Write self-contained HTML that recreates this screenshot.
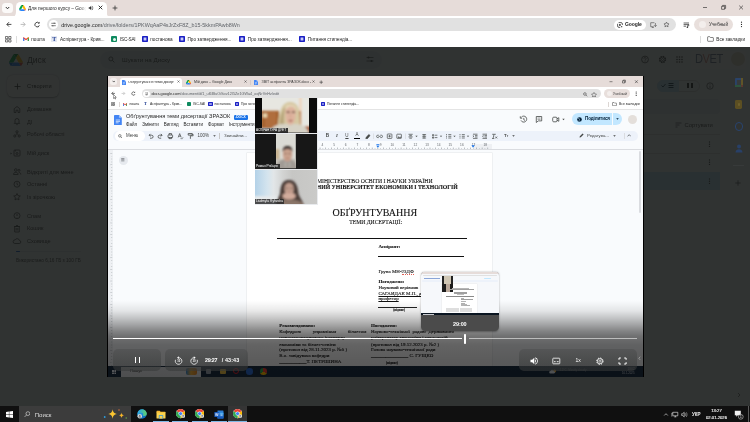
<!DOCTYPE html>
<html lang="uk">
<head>
<meta charset="utf-8">
<title>Для першого курсу – Google Диск</title>
<style>
html,body{margin:0;padding:0;}
body{width:750px;height:422px;overflow:hidden;background:#323433;font-family:"Liberation Sans",sans-serif;position:relative;}
.abs{position:absolute;}
.t{position:absolute;white-space:nowrap;line-height:1;}
/* ---------- outer chrome ---------- */
#tabstrip{left:0;top:0;width:750px;height:17px;background:#e6dcd9;}
#tab{left:16px;top:2px;width:90.5px;height:15px;background:#fff;border-radius:4.5px 4.5px 0 0;}
#toolbar{left:0;top:16px;width:750px;height:17px;background:#fff;}
#urlbar{left:47px;top:18px;width:629px;height:13px;border-radius:7px;background:#e1e1e1;}
#bookmarks{left:0;top:33px;width:750px;height:14px;background:#fff;}
.bm{font-size:4.65px;color:#1f1f1f;top:37.5px;}
.bmi{position:absolute;top:36px;width:6.3px;height:6.3px;background:#1a1fc4;border-radius:1px;box-shadow:inset 0 0 0 1.6px #1a1fc4, inset 0 0 0 3px #c9cdf5;}
/* ---------- drive page ---------- */
#drive{left:0;top:47px;width:750px;height:359px;background:#f8fafd;overflow:hidden;}
#dim{left:0;top:47px;width:750px;height:359px;background:rgba(18,21,20,.87);}
.side{font-size:5.6px;color:#3c3f3e;left:27px;}
.ibm{font-size:3.35px;color:#1f1f1f;top:102.9px;}
.ibmi{position:absolute;top:101.7px;width:4.5px;height:4.5px;background:#1a1fc4;border-radius:.8px;box-shadow:inset 0 0 0 1.2px #1a1fc4, inset 0 0 0 2.2px #c9cdf5;}
.rn{font-size:3.2px;color:#5f6368;top:143.8px;width:6px;text-align:center;}
.ds{font-family:"Liberation Serif",serif;font-size:4.97px;text-underline-offset:.5px;text-decoration-thickness:.35px;color:#111;-webkit-text-stroke:.1px #111;}
.b{font-weight:bold;}
.pill{border-radius:5px;background:linear-gradient(180deg,rgba(70,72,72,.42),rgba(55,57,57,.58));}
.tr{-webkit-text-stroke:.15px currentColor;}
/* ---------- taskbar ---------- */
#taskbar{left:0;top:405.8px;width:750px;height:16.2px;background:#101010;}
.ul{top:420.7px;height:1.3px;background:#7fb9e6;}
</style>
</head>
<body>
<div id="root" style="position:absolute;left:0;top:0;width:750px;height:422px;overflow:hidden;will-change:transform;">
<!-- ===== Outer Chrome window ===== -->
<div class="abs" id="tabstrip"></div>
<div class="abs" style="left:2.4px;top:2.5px;width:10.6px;height:10.4px;border-radius:3.5px;background:#fbf9f8;"></div>
<svg class="abs" style="left:5.2px;top:6px" width="5" height="4" viewBox="0 0 5 4"><path d="M.8 1 L2.5 2.8 L4.2 1" fill="none" stroke="#333" stroke-width="1"/></svg>
<div class="abs" id="tab"></div>
<svg class="abs" style="left:18.5px;top:5px" width="7" height="6.2" viewBox="0 0 87.3 78"><path d="M6.6 66.85l3.85 6.65c.8 1.4 1.95 2.5 3.3 3.3L27.5 53H0c0 1.55.4 3.1 1.2 4.5z" fill="#0066da"/><path d="M43.65 25L29.9 1.2c-1.35.8-2.5 1.9-3.3 3.3L1.2 48.5C.4 49.9 0 51.45 0 53h27.5z" fill="#00ac47"/><path d="M73.55 76.8c1.35-.8 2.5-1.9 3.3-3.3l1.6-2.75L86.1 57.5c.8-1.4 1.2-2.95 1.2-4.5H59.8l5.85 11.5z" fill="#ea4335"/><path d="M43.65 25L57.4 1.2C56.05.4 54.5 0 52.9 0H34.4c-1.6 0-3.15.45-4.5 1.2z" fill="#00832d"/><path d="M59.8 53H27.5L13.75 76.8c1.35.8 2.9 1.2 4.5 1.2h50.8c1.6 0 3.15-.45 4.5-1.2z" fill="#2684fc"/><path d="M73.4 26.5L60.7 4.5c-.8-1.4-1.95-2.5-3.3-3.3L43.65 25 59.8 53h27.45c0-1.55-.4-3.1-1.2-4.5z" fill="#ffba00"/></svg>
<div class="t" style="left:28px;top:5.8px;font-size:4.8px;color:#1f1f1f;width:58px;height:7px;overflow:hidden;line-height:7px;margin-top:-1.1px">Для першого курсу – Google Диск</div>
<div class="abs" style="left:80px;top:4px;width:6px;height:10px;background:linear-gradient(90deg,rgba(255,255,255,0),#fff);"></div>
<svg class="abs" style="left:87.5px;top:5.2px" width="6" height="6" viewBox="0 0 24 24"><path d="M3 9v6h4l5 5V4L7 9H3zm13.5 3A4.5 4.5 0 0014 8v8a4.5 4.5 0 002.5-4zM14 3.2v2.1a7 7 0 010 13.4v2.1a9 9 0 000-17.6z" fill="#333"/></svg>
<svg class="abs" style="left:97.5px;top:5.2px" width="5" height="5" viewBox="0 0 5 5"><path d="M.7.7L4.3 4.3M4.3.7L.7 4.3" stroke="#222" stroke-width=".9"/></svg>
<svg class="abs" style="left:111.5px;top:5.2px" width="6" height="6" viewBox="0 0 6 6"><path d="M3 .6V5.4M.6 3H5.4" stroke="#333" stroke-width=".8"/></svg>
<!-- window controls -->
<svg class="abs" style="left:702px;top:4px" width="44" height="8" viewBox="0 0 44 8"><path d="M1 3.5H5" stroke="#222" stroke-width=".6"/><path d="M19.6 2.3h3v3h-3z M20.6 2.3v-.9h3v3h-1" fill="none" stroke="#222" stroke-width=".6"/><path d="M37.2 1.6L41 5.4M41 1.6L37.2 5.4" stroke="#222" stroke-width=".6"/></svg>
<div class="abs" id="toolbar"></div>
<svg class="abs" style="left:12px;top:12px" width="99" height="5" viewBox="0 0 99 5"><path d="M0 5h4V0c0 3-1.5 5-4 5zM99 5h-4.5V0c0 3 1.5 5 4.5 5z" fill="#fff"/></svg>
<svg class="abs" style="left:5.5px;top:21px" width="36" height="7" viewBox="0 0 36 7"><path d="M5.4 3.4H1M3 1.2L.8 3.4 3 5.6" fill="none" stroke="#2a2a2a" stroke-width=".85"/><path d="M14.6 3.4H19M17 1.2l2.2 2.2L17 5.6" fill="none" stroke="#b0b0b0" stroke-width=".85"/><path d="M33 2.2A2.3 2.3 0 1 0 33.4 4.3" fill="none" stroke="#2a2a2a" stroke-width=".85"/><path d="M33.6.8v1.8h-1.8z" fill="#333"/></svg>
<div class="abs" id="urlbar"></div>
<div class="abs" style="left:49px;top:20px;width:9px;height:9px;border-radius:5px;background:#fff;"></div>
<svg class="abs" style="left:51px;top:22px" width="5" height="5" viewBox="0 0 5 5"><path d="M.3 1.3H2.4M3.8 1.3H4.8M.3 3.7H1.2M2.6 3.7H4.8" stroke="#333" stroke-width=".6"/><circle cx="3.1" cy="1.3" r=".7" fill="#333"/><circle cx="1.9" cy="3.7" r=".7" fill="#333"/></svg>
<div class="t" style="left:61.3px;top:22.9px;font-size:5.38px;color:#5f6368;"><span style="color:#1f1f1f">drive.google.com</span>/drive/folders/1PKWqAaP4sJrZxF8Z_b15-5kkmPAwb8Wn</div>
<!-- right side of toolbar -->
<div class="abs" style="left:614px;top:19.5px;width:32px;height:10px;border-radius:5px;background:#fff;"></div>
<svg class="abs" style="left:616.5px;top:21.5px" width="6" height="6" viewBox="0 0 6 6"><path d="M1.6.6H4a1.4 1.4 0 011.4 1.4V3M.6 1.8V4A1.4 1.4 0 002 5.4H3.2" fill="none" stroke="#222" stroke-width=".7"/><circle cx="2.9" cy="2.9" r=".9" fill="#222"/><circle cx="4.7" cy="4.7" r=".6" fill="#222"/></svg>
<div class="t" style="left:625px;top:22.2px;font-size:5px;color:#1f1f1f;font-weight:bold;letter-spacing:-.1px">Google</div>
<svg class="abs" style="left:650px;top:21.5px" width="7" height="6" viewBox="0 0 7 6"><path d="M4.4.7H.7v4h3M1.8 5.5h2" fill="none" stroke="#444" stroke-width=".6"/><path d="M5.4 1v3.4M3.9 3.1l1.5 1.5 1.3-1.5" fill="none" stroke="#444" stroke-width=".6"/></svg>
<svg class="abs" style="left:662.5px;top:21px" width="7" height="7" viewBox="0 0 24 24"><path d="M12 3.5l2.6 5.6 6.1.7-4.5 4.2 1.2 6-5.4-3-5.4 3 1.2-6-4.5-4.2 6.1-.7z" fill="none" stroke="#444" stroke-width="2"/></svg>
<svg class="abs" style="left:683px;top:21.5px" width="7" height="6" viewBox="0 0 7 6"><path d="M.6 1h5.4M.6 2.6h5.4M.6 4.2H3" stroke="#222" stroke-width=".7"/><path d="M4.8 3.2v2.2M4.8 3.2h1.5" stroke="#222" stroke-width=".7"/><circle cx="4.3" cy="5.2" r=".7" fill="#222"/></svg>
<div class="abs" style="left:694px;top:18px;width:39px;height:13px;border-radius:6.5px;background:#e8dfdc;"></div>
<div class="abs" style="left:699px;top:21px;width:7px;height:7px;border-radius:4px;background:#f3eeec;"></div>
<div class="t" style="left:709px;top:22.5px;font-size:4.65px;color:#333;">Учебный</div>
<svg class="abs" style="left:740px;top:21px" width="3" height="7" viewBox="0 0 3 7"><circle cx="1.5" cy="1.2" r=".6" fill="#222"/><circle cx="1.5" cy="3.4" r=".6" fill="#222"/><circle cx="1.5" cy="5.6" r=".6" fill="#222"/></svg>
<div class="abs" id="bookmarks"></div>
<svg class="abs" style="left:5px;top:36px" width="6.5" height="6.5" viewBox="0 0 13 13"><path d="M1 1h4.5v4.5H1zM7.5 1H12v4.5H7.5zM1 7.5h4.5V12H1zM7.5 7.5H12V12H7.5z" fill="none" stroke="#333" stroke-width="1.3"/></svg>
<div class="abs" style="left:16.3px;top:36px;width:.5px;height:6.5px;background:#dcdcdc;"></div>
<svg class="abs" style="left:22.8px;top:36.8px" width="6" height="4.6" viewBox="0 0 24 18"><path d="M0 2v14a2 2 0 002 2h3V7.5l7 5.2 7-5.2V18h3a2 2 0 002-2V2l-3-1.5-9 6.8-9-6.8z" fill="#ea4335"/><path d="M0 2.5V16a2 2 0 002 2h3V6.5z" fill="#4285f4"/><path d="M24 2.5V16a2 2 0 01-2 2h-3V6.5z" fill="#34a853"/><path d="M19 1.2l5 1.3-5 4.5z" fill="#fbbc04"/></svg>
<div class="t bm" style="left:31.3px;">пошта</div>
<div class="abs" style="left:51.3px;top:36.2px;width:5.5px;height:6px;background:#e4e8f2;"></div>
<div class="t" style="left:52.3px;top:36.3px;font-size:6px;font-weight:bold;color:#1d3a8f;font-family:'Liberation Serif',serif">T</div>
<div class="t bm" style="left:60px;">Аспірантура - Крив...</div>
<div class="abs" style="left:111.3px;top:36px;width:6.2px;height:6.2px;background:#0e8a5f;border-radius:1px;"></div>
<div class="abs" style="left:112.8px;top:37.5px;width:3.2px;height:3.2px;background:#e8f5ee;border-radius:2px;"></div>
<div class="t bm" style="left:120px;letter-spacing:-.2px;">ISC-SAI</div>
<div class="bmi" style="left:141.7px;"></div><div class="t bm" style="left:150.3px;">постанова</div>
<div class="bmi" style="left:178.7px;"></div><div class="t bm" style="left:187.5px;">Про затвердження...</div>
<div class="bmi" style="left:239px;"></div><div class="t bm" style="left:247.8px;">Про затвердження...</div>
<div class="bmi" style="left:299px;"></div><div class="t bm" style="left:307.8px;">Питання стипендіа...</div>
<div class="abs" style="left:700.3px;top:36px;width:.5px;height:6.5px;background:#dcdcdc;"></div>
<svg class="abs" style="left:706.5px;top:36.3px" width="7" height="6" viewBox="0 0 7 6"><path d="M.6 1.2a.5.5 0 01.5-.5h1.7l.7.8h2.4a.5.5 0 01.5.5v2.8a.5.5 0 01-.5.5H1.1a.5.5 0 01-.5-.5z" fill="none" stroke="#333" stroke-width=".6"/></svg>
<div class="t bm" style="left:716.3px;">Все закладки</div>

<!-- ===== Drive page (dimmed) ===== -->
<div class="abs" id="drive">
  <!-- header -->
  <svg class="abs" style="left:9px;top:6.5px" width="14" height="12.5" viewBox="0 0 87.3 78"><path d="M6.6 66.85l3.85 6.65c.8 1.4 1.95 2.5 3.3 3.3L27.5 53H0c0 1.55.4 3.1 1.2 4.5z" fill="#0066da"/><path d="M43.65 25L29.9 1.2c-1.35.8-2.5 1.9-3.3 3.3L1.2 48.5C.4 49.9 0 51.45 0 53h27.5z" fill="#00ac47"/><path d="M73.55 76.8c1.35-.8 2.5-1.9 3.3-3.3l1.6-2.75L86.1 57.5c.8-1.4 1.2-2.95 1.2-4.5H59.8l5.85 11.5z" fill="#ea4335"/><path d="M43.65 25L57.4 1.2C56.05.4 54.5 0 52.9 0H34.4c-1.6 0-3.15.45-4.5 1.2z" fill="#00832d"/><path d="M59.8 53H27.5L13.75 76.8c1.35.8 2.9 1.2 4.5 1.2h50.8c1.6 0 3.15-.45 4.5-1.2z" fill="#2684fc"/><path d="M73.4 26.5L60.7 4.5c-.8-1.4-1.95-2.5-3.3-3.3L43.65 25 59.8 53h27.45c0-1.55-.4-3.1-1.2-4.5z" fill="#ffba00"/></svg>
  <div class="t" style="left:27px;top:8.8px;font-size:8.6px;color:#444746;">Диск</div>
  <div class="abs" style="left:100px;top:3.5px;width:282px;height:18px;border-radius:9px;background:#e9eef6;"></div>
  <svg class="abs" style="left:107.5px;top:9px" width="7" height="7" viewBox="0 0 7 7"><circle cx="2.9" cy="2.9" r="2" fill="none" stroke="#444746" stroke-width=".8"/><path d="M4.4 4.4L6.4 6.4" stroke="#444746" stroke-width=".8"/></svg>
  <div class="t" style="left:122px;top:9.5px;font-size:6.2px;color:#444746;">Шукати на Диску</div>
  <svg class="abs" style="left:366px;top:9px" width="8" height="7" viewBox="0 0 8 7"><path d="M.5 1.5H7.5M.5 5H7.5" stroke="#444746" stroke-width=".7"/><circle cx="2.5" cy="1.5" r="1" fill="#444746"/><circle cx="5.5" cy="5" r="1" fill="#444746"/></svg>
  <svg class="abs" style="left:640px;top:7.5px" width="46" height="9" viewBox="0 0 46 9"><circle cx="5" cy="4.5" r="3.4" fill="none" stroke="#444746" stroke-width=".8"/><path d="M3.9 3.7a1.1 1.1 0 112 .6c-.5.4-.9.6-.9 1.3" fill="none" stroke="#444746" stroke-width=".7"/><circle cx="5" cy="6.6" r=".45" fill="#444746"/><circle cx="22.5" cy="4.5" r="3" fill="none" stroke="#444746" stroke-width="1.3" stroke-dasharray="1.4 .95"/><circle cx="22.5" cy="4.5" r="2.5" fill="none" stroke="#444746" stroke-width=".8"/><circle cx="22.5" cy="4.5" r="1" fill="none" stroke="#444746" stroke-width=".7"/><g fill="#444746"><circle cx="37" cy="2" r=".8"/><circle cx="39.5" cy="2" r=".8"/><circle cx="42" cy="2" r=".8"/><circle cx="37" cy="4.5" r=".8"/><circle cx="39.5" cy="4.5" r=".8"/><circle cx="42" cy="4.5" r=".8"/><circle cx="37" cy="7" r=".8"/><circle cx="39.5" cy="7" r=".8"/><circle cx="42" cy="7" r=".8"/></g></svg>
  <div class="abs" style="left:691px;top:3.5px;width:55px;height:18px;border-radius:4px;background:#fff;"></div>
  <div class="t" style="left:695px;top:5px;font-size:13.5px;color:#6d7896;letter-spacing:-.5px;transform:scaleX(.82);transform-origin:0 0;font-weight:normal;">D<span style="color:#d98a82">V</span>ET</div>
  <div class="abs" style="left:730.5px;top:5px;width:14px;height:14px;border-radius:7px;background:#e7dcc9;"></div>
  <!-- create button -->
  <div class="abs" style="left:7px;top:28px;width:52px;height:22px;border-radius:6px;background:#fff;box-shadow:0 .5px 1.5px rgba(0,0,0,.35);"></div>
  <svg class="abs" style="left:13.5px;top:35.5px" width="7" height="7" viewBox="0 0 7 7"><path d="M3.5.5V6.5M.5 3.5H6.5" stroke="#1f1f1f" stroke-width=".8"/></svg>
  <div class="t" style="left:27px;top:37px;font-size:5.6px;color:#1f1f1f;">Створити</div>
  <!-- sidebar -->
  <div class="t side" style="top:60.2px;">Домашня</div>
  <div class="t side" style="top:72.7px;">ДІ</div>
  <div class="t side" style="top:85.2px;">Робочі області</div>
  <div class="t side" style="top:104.2px;">Мій диск</div>
  <div class="t side" style="top:122.7px;">Відкриті для мене</div>
  <div class="t side" style="top:135.2px;">Останні</div>
  <div class="t side" style="top:147.7px;">Із зірочкою</div>
  <div class="t side" style="top:166.7px;">Спам</div>
  <div class="t side" style="top:179.2px;">Кошик</div>
  <div class="t side" style="top:191.7px;">Сховище</div>
  <svg class="abs" style="left:9px;top:58px" width="14" height="142" viewBox="0 0 14 142"><g fill="none" stroke="#444746" stroke-width=".8"><path d="M5.2 7.5V3.7L8 1.5l2.8 2.2V7.5H9V5.2H7V7.5z"/><path d="M8 13.5a2 2 0 00-2 2v2l-.7.9h5.4l-.7-.9v-2a2 2 0 00-2-2zM7.3 19.6h1.4"/><circle cx="8" cy="26.8" r="1.1"/><circle cx="5.8" cy="31" r="1.1"/><circle cx="10.2" cy="31" r="1.1"/><path d="M8 28v1.5M6.5 30l1-.7M9.5 30l-1-.7"/><rect x="5" y="45" width="6" height="6" rx=".8"/><circle cx="8" cy="48.5" r="1"/><path d="M6.3 45v1.5"/><circle cx="6.8" cy="65" r="1.3"/><circle cx="10" cy="65.3" r="1"/><path d="M4.5 69.5c0-1.5 1.2-2.2 2.3-2.2s2.3.7 2.3 2.2zM9.8 67.5c1.1 0 2 .6 2 2"/><circle cx="8" cy="79.2" r="3"/><path d="M8 77.5v1.9l1.3.8"/><path d="M8 88.5l1 2.2 2.3.3-1.7 1.6.4 2.3-2-1.1-2 1.1.4-2.3-1.7-1.6 2.3-.3z"/><circle cx="8" cy="110.7" r="3"/><path d="M8 109v2M8 112.2v.4"/><path d="M5.7 121.5h4.6v5.5H5.7zM5 121.5h6M7 120.5h2M7.2 123v2.5M8.8 123v2.5"/><path d="M5.8 138.5a1.8 1.8 0 01.3-3.6 2.3 2.3 0 014.3.6 1.5 1.5 0 01-.2 3z"/></g><path d="M1.5 47.5l1.5 1-1.5 1z" fill="#444746"/></svg>
  <div class="abs" style="left:16px;top:203.5px;width:65px;height:1.2px;border-radius:1px;background:#dfe3ea;"></div>
  <div class="abs" style="left:16px;top:203.5px;width:4px;height:1.2px;border-radius:1px;background:#0b57d0;"></div>
  <div class="t" style="left:16px;top:212.2px;font-size:4.7px;color:#444746;">Використано 6,16 ГБ з 100 ГБ</div>
  <!-- right side -->
  <div class="abs" style="left:657.3px;top:32.5px;width:43px;height:12px;border-radius:6px;border:.5px solid #d5d8d7;box-sizing:border-box;"></div>
  <div class="abs" style="left:657.3px;top:32.5px;width:22px;height:12px;border-radius:6px 0 0 6px;background:#c2e7ff;border:.5px solid #c2e7ff;box-sizing:border-box;"></div>
  <svg class="abs" style="left:661px;top:35px" width="36" height="7" viewBox="0 0 36 7"><path d="M.5 3.5l1.5 1.5 2.5-3" fill="none" stroke="#001d35" stroke-width=".8"/><path d="M7.5 1.5h5M7.5 3.5h5M7.5 5.5h5" stroke="#001d35" stroke-width=".9"/><path d="M26 1h2v5h-2zM30 1h2v5h-2z" fill="#1f1f1f"/></svg>
  <svg class="abs" style="left:706px;top:35px" width="8" height="8" viewBox="0 0 8 8"><circle cx="4" cy="4" r="3.2" fill="none" stroke="#444746" stroke-width=".7"/><path d="M4 3.6V6M4 2.2v.6" stroke="#444746" stroke-width=".7"/></svg>
  <svg class="abs" style="left:735px;top:132.5px" width="6" height="6" viewBox="0 0 6 6"><path d="M3 .3V5.7M.3 3H5.7" stroke="#444746" stroke-width=".7"/></svg>
  <svg class="abs" style="left:675px;top:75px" width="7" height="6" viewBox="0 0 7 6"><path d="M.5 1h6M.5 3h4M.5 5h2" stroke="#444746" stroke-width=".7"/></svg>
  <div class="t" style="left:684.5px;top:75.6px;font-size:5.85px;color:#444746;">Сортувати</div>
  <div class="abs" style="left:390px;top:87.2px;width:330px;height:.5px;background:#dcdcdc;"></div><div class="abs" style="left:390px;top:106.2px;width:330px;height:.5px;background:#dcdcdc;"></div><div class="abs" style="left:390px;top:52px;width:330px;height:14.5px;border-radius:4px;background:#e4eaf3;"></div>
  <div class="abs" style="left:390px;top:124.5px;width:330px;height:18.5px;background:#c2e7ff;"></div>
  <svg class="abs" style="left:708px;top:93px" width="3" height="46" viewBox="0 0 3 46"><g fill="#444746"><circle cx="1.5" cy="2" r=".7"/><circle cx="1.5" cy="4.2" r=".7"/><circle cx="1.5" cy="6.4" r=".7"/><circle cx="1.5" cy="20" r=".7"/><circle cx="1.5" cy="22.2" r=".7"/><circle cx="1.5" cy="24.4" r=".7"/><circle cx="1.5" cy="39" r=".7"/><circle cx="1.5" cy="41.2" r=".7"/><circle cx="1.5" cy="43.4" r=".7"/></g></svg>
  <svg class="abs" style="left:737px;top:345px" width="4" height="6" viewBox="0 0 4 6"><path d="M1 1l2 2-2 2" fill="none" stroke="#444746" stroke-width=".7"/></svg>
</div>
<div class="abs" id="dim"></div>
<!-- side panel icons (already dimmed colours) -->
<div class="abs" style="left:734.6px;top:78.4px;width:8.4px;height:8.4px;border-radius:1.4px;background:#2a4369;box-shadow:inset 0 0 0 1.9px #2a4369, inset 0 0 0 4.2px #363a3c;"></div>
<div class="abs" style="left:740.8px;top:84.6px;width:2.2px;height:2.2px;background:#5c3730;"></div>
<div class="abs" style="left:740.8px;top:78.4px;width:2.2px;height:6.2px;background:#605428;"></div>
<div class="abs" style="left:734.6px;top:84.6px;width:6.2px;height:2.2px;background:#2c543d;"></div>
<div class="abs" style="left:735.2px;top:100.4px;width:7.2px;height:8.4px;border-radius:1.4px;background:#5c4f22;"></div>
<div class="abs" style="left:737.6px;top:103px;width:2.4px;height:3px;border-radius:1.2px;background:#6f602d;"></div>
<div class="abs" style="left:734.8px;top:122.4px;width:8.2px;height:8.2px;border-radius:4.1px;border:1.6px solid #28436e;box-sizing:border-box;"></div>
<svg class="abs" style="left:735px;top:143.6px" width="8" height="9" viewBox="0 0 8 9"><circle cx="4" cy="2.5" r="2" fill="#284068"/><path d="M.5 8.5c0-2.5 1.7-3.3 3.5-3.3s3.5.8 3.5 3.3z" fill="#284068"/></svg>
<div class="abs" style="left:733px;top:165px;width:11px;height:.4px;background:#373a3a;"></div>

<!-- ===== Video player ===== -->
<div class="abs" id="video" style="left:106.7px;top:75.6px;width:537.3px;height:301.8px;background:#000;overflow:hidden;">
<div class="abs" id="vin" style="left:-106.7px;top:-75.6px;width:750px;height:422px;">
  <!-- recorded screen -->
  <div class="abs" style="left:108px;top:76px;width:534.6px;height:301px;background:#f9fbfd;"></div>
  <!-- inner chrome: tab strip -->
  <div class="abs" style="left:108px;top:76px;width:534.6px;height:11px;background:#e6dcd9;"></div>
  <div class="abs" style="left:110px;top:78px;width:7px;height:7px;border-radius:2.5px;background:#f4efed;"></div>
  <svg class="abs" style="left:111.7px;top:80.3px" width="3.6" height="3" viewBox="0 0 5 4"><path d="M.8 1L2.5 2.8 4.2 1" fill="none" stroke="#333" stroke-width="1"/></svg>
  <div class="abs" style="left:119.5px;top:78px;width:62.5px;height:9px;border-radius:3px 3px 0 0;background:#fff;"></div>
  <svg class="abs" style="left:122px;top:79.5px" width="4" height="5.4" viewBox="0 0 11 15"><path d="M1 0h6l4 4v10a1 1 0 01-1 1H1a1 1 0 01-1-1V1a1 1 0 011-1z" fill="#4285f4"/><path d="M7 0l4 4H7z" fill="#a1c2fa"/><path d="M2.5 7h6M2.5 9h6M2.5 11h4" stroke="#fff" stroke-width=".9"/></svg>
  <div class="t" style="left:128px;top:81.4px;font-size:3.6px;color:#1f1f1f;width:46px;overflow:hidden;">Обґрунтування теми дисерта...</div>
  <svg class="abs" style="left:177.0px;top:80.4px" width="3" height="3" viewBox="0 0 5 5"><path d="M.7.7L4.3 4.3M4.3.7L.7 4.3" stroke="#333" stroke-width=".8"/></svg>
  <svg class="abs" style="left:185.5px;top:80px" width="5" height="4.5" viewBox="0 0 87.3 78"><path d="M6.6 66.85l3.85 6.65c.8 1.4 1.95 2.5 3.3 3.3L27.5 53H0c0 1.55.4 3.1 1.2 4.5z" fill="#0066da"/><path d="M43.65 25L29.9 1.2c-1.35.8-2.5 1.9-3.3 3.3L1.2 48.5C.4 49.9 0 51.45 0 53h27.5z" fill="#00ac47"/><path d="M73.55 76.8c1.35-.8 2.5-1.9 3.3-3.3l1.6-2.75L86.1 57.5c.8-1.4 1.2-2.95 1.2-4.5H59.8l5.85 11.5z" fill="#ea4335"/><path d="M43.65 25L57.4 1.2C56.05.4 54.5 0 52.9 0H34.4c-1.6 0-3.15.45-4.5 1.2z" fill="#00832d"/><path d="M59.8 53H27.5L13.75 76.8c1.35.8 2.9 1.2 4.5 1.2h50.8c1.6 0 3.15-.45 4.5-1.2z" fill="#2684fc"/><path d="M73.4 26.5L60.7 4.5c-.8-1.4-1.95-2.5-3.3-3.3L43.65 25 59.8 53h27.45c0-1.55-.4-3.1-1.2-4.5z" fill="#ffba00"/></svg>
  <div class="t" style="left:194px;top:81.4px;font-size:3.55px;color:#333;">Мій диск – Google Диск</div>
  <svg class="abs" style="left:243.5px;top:80.4px" width="3" height="3" viewBox="0 0 5 5"><path d="M.7.7L4.3 4.3M4.3.7L.7 4.3" stroke="#333" stroke-width=".8"/></svg>
  <div class="abs" style="left:250.3px;top:79.5px;width:.4px;height:5px;background:#d6cbc7;"></div>
  <svg class="abs" style="left:254px;top:79.5px" width="4" height="5.4" viewBox="0 0 11 15"><path d="M1 0h6l4 4v10a1 1 0 01-1 1H1a1 1 0 01-1-1V1a1 1 0 011-1z" fill="#4285f4"/><path d="M7 0l4 4H7z" fill="#a1c2fa"/><path d="M2.5 7h6M2.5 9h6M2.5 11h4" stroke="#fff" stroke-width=".9"/></svg>
  <div class="t" style="left:261.5px;top:81.4px;font-size:3.55px;color:#333;">ЗВІТ аспіранта ЗРАЗОК.docx -</div>
  <svg class="abs" style="left:311.5px;top:80.4px" width="3" height="3" viewBox="0 0 5 5"><path d="M.7.7L4.3 4.3M4.3.7L.7 4.3" stroke="#333" stroke-width=".8"/></svg>
  <svg class="abs" style="left:319px;top:80px" width="4.4" height="4.4" viewBox="0 0 6 6"><path d="M3 .6V5.4M.6 3H5.4" stroke="#333" stroke-width=".8"/></svg>
  <svg class="abs" style="left:608px;top:79px" width="32" height="6" viewBox="0 0 32 6"><path d="M1.5 2.7H4.5" stroke="#222" stroke-width=".5"/><path d="M14.5 1.8h2.2v2.2h-2.2z M15.2 1.8v-.7h2.2v2.2h-.7" fill="none" stroke="#222" stroke-width=".5"/><path d="M27 1.3l2.8 2.8M29.8 1.3L27 4.1" stroke="#222" stroke-width=".5"/></svg>
  <!-- inner chrome: toolbar -->
  <div class="abs" style="left:108px;top:87px;width:534.6px;height:22.3px;background:#fff;"></div>
  <svg class="abs" style="left:111px;top:91px" width="26" height="5" viewBox="0 0 36 7"><path d="M5.4 3.4H1M3 1.2L.8 3.4 3 5.6" fill="none" stroke="#333" stroke-width=".9"/><path d="M14.6 3.4H19M17 1.2l2.2 2.2L17 5.6" fill="none" stroke="#b5b5b5" stroke-width=".9"/><path d="M33 2.2A2.3 2.3 0 1033.4 4.3" fill="none" stroke="#333" stroke-width=".9"/><path d="M33.6.8v1.8h-1.8z" fill="#333"/></svg>
  <div class="abs" style="left:142px;top:89.4px;width:458.5px;height:8.7px;border-radius:4.5px;background:#e1e1e1;"></div>
  <div class="abs" style="left:143.3px;top:90.5px;width:6.4px;height:6.4px;border-radius:3.2px;background:#fff;"></div>
  <svg class="abs" style="left:144.7px;top:92px" width="3.6" height="3.6" viewBox="0 0 5 5"><path d="M.3 1.3H2.4M3.8 1.3H4.8M.3 3.7H1.2M2.6 3.7H4.8" stroke="#333" stroke-width=".7"/><circle cx="3.1" cy="1.3" r=".7" fill="#333"/><circle cx="1.9" cy="3.7" r=".7" fill="#333"/></svg>
  <div class="t" style="left:151.5px;top:92.9px;font-size:3.82px;color:#5f6368;"><span style="color:#1f1f1f">docs.google.com</span>/document/d/1_ul6lBuOiSov12I5Ze1GWa4_oqNrVnHz/edit</div>
  <svg class="abs" style="left:583px;top:91.5px" width="14" height="5" viewBox="0 0 14 5"><circle cx="1.9" cy="2" r="1.3" fill="none" stroke="#444" stroke-width=".6"/><path d="M2.9 3L4.2 4.3" stroke="#444" stroke-width=".6"/><path d="M11 .4l.8 1.5 1.7.2-1.2 1.2.3 1.7-1.6-.8-1.6.8.3-1.7L8.5 2.1l1.7-.2z" fill="none" stroke="#444" stroke-width=".5"/></svg>
  <div class="abs" style="left:603.7px;top:89.4px;width:26.6px;height:8.7px;border-radius:4.5px;background:#e8dfdc;"></div>
  <div class="abs" style="left:606.5px;top:91.3px;width:5px;height:5px;border-radius:2.5px;background:#f3eeec;"></div>
  <div class="t" style="left:613px;top:92.8px;font-size:3.4px;color:#333;">Учебный</div>
  <svg class="abs" style="left:635.3px;top:91.2px" width="2.4" height="5.6" viewBox="0 0 3 7"><circle cx="1.5" cy="1.2" r=".7" fill="#222"/><circle cx="1.5" cy="3.4" r=".7" fill="#222"/><circle cx="1.5" cy="5.6" r=".7" fill="#222"/></svg>
  <!-- inner chrome: bookmarks -->
  <svg class="abs" style="left:111px;top:101.8px" width="4.4" height="4.4" viewBox="0 0 13 13"><path d="M1 1h4.5v4.5H1zM7.5 1H12v4.5H7.5zM1 7.5h4.5V12H1zM7.5 7.5H12V12H7.5z" fill="none" stroke="#333" stroke-width="1.5"/></svg>
  <div class="abs" style="left:118.7px;top:101.5px;width:.4px;height:5px;background:#dcd6d3;"></div>
  <svg class="abs" style="left:123.2px;top:102.5px" width="4.2" height="3.2" viewBox="0 0 24 18"><path d="M0 2v14a2 2 0 002 2h3V7.5l7 5.2 7-5.2V18h3a2 2 0 002-2V2l-3-1.5-9 6.8-9-6.8z" fill="#ea4335"/><path d="M0 2.5V16a2 2 0 002 2h3V6.5z" fill="#4285f4"/><path d="M24 2.5V16a2 2 0 01-2 2h-3V6.5z" fill="#34a853"/></svg>
  <div class="t ibm" style="left:129.5px;">пошта</div>
  <div class="t" style="left:144px;top:101.8px;font-size:4.3px;font-weight:bold;color:#1d3a8f;font-family:'Liberation Serif',serif">T</div>
  <div class="t ibm" style="left:150px;">Аспірантура - Крив...</div>
  <div class="abs" style="left:186.5px;top:101.7px;width:4.5px;height:4.5px;background:#0e8a5f;border-radius:.8px;"></div>
  <div class="t ibm" style="left:193px;">ISC-SAI</div>
  <div class="ibmi" style="left:208px;"></div><div class="t ibm" style="left:214.5px;">постанова</div>
  <div class="ibmi" style="left:234.7px;"></div><div class="t ibm" style="left:241px;">Про затвердження...</div>
  <div class="ibmi" style="left:277.5px;"></div><div class="t ibm" style="left:284px;">Про затвердження...</div>
  <div class="ibmi" style="left:320.5px;"></div><div class="t ibm" style="left:327px;">Питання стипендіа...</div>
  <div class="abs" style="left:607.5px;top:101.5px;width:.4px;height:5px;background:#dcd6d3;"></div>
  <svg class="abs" style="left:611.5px;top:102px" width="5" height="4.2" viewBox="0 0 7 6"><path d="M.6 1.2a.5.5 0 01.5-.5h1.7l.7.8h2.4a.5.5 0 01.5.5v2.8a.5.5 0 01-.5.5H1.1a.5.5 0 01-.5-.5z" fill="none" stroke="#333" stroke-width=".7"/></svg>
  <div class="t ibm" style="left:619px;">Все закладки</div>
  <div class="abs" style="left:108px;top:109.1px;width:534.6px;height:.4px;background:#e4e4e4;"></div>
  <!-- docs header -->
  <div class="abs" style="left:108px;top:109.5px;width:534.6px;height:39px;background:#f9fbfd;"></div>
  <svg class="abs" style="left:114px;top:114.5px" width="7.8" height="10.7" viewBox="0 0 11 15"><path d="M1 0h6l4 4v10a1 1 0 01-1 1H1a1 1 0 01-1-1V1a1 1 0 011-1z" fill="#4285f4"/><path d="M7 0l4 4H7z" fill="#a1c2fa"/><path d="M2.5 7h6M2.5 9h6M2.5 11h4" stroke="#fff" stroke-width=".9"/></svg>
  <div class="t" style="left:126px;top:114.4px;font-size:5.57px;color:#1f1f1f;">Обґрунтування теми дисертації ЗРАЗОК</div>
  <div class="abs" style="left:233.6px;top:114.8px;width:14.7px;height:5.4px;border-radius:1.3px;background:#1a73e8;"></div>
  <div class="t" style="left:235.3px;top:116px;font-size:3.3px;color:#fff;font-weight:bold;">.DOCX</div>
  <div class="t" style="left:126px;top:123.2px;font-size:4.55px;color:#1f1f1f;word-spacing:3.7px;">Файл Змінити Вигляд Вставити Формат Інструменти</div>
  <svg class="abs" style="left:519px;top:114.5px" width="50" height="9" viewBox="0 0 50 9"><g fill="none" stroke="#444746" stroke-width=".8"><path d="M2.4 2.2A3 3 0 112 5.4"/><path d="M1.3 1.3v1.9h1.9M4.8 2.9v1.8l1.3.8"/><path d="M17.3 1.5h5.4v4.4h-3.4l-2 1.6z"/><path d="M18.5 3h3M18.5 4.4h3" stroke-width=".5"/><rect x="33.7" y="2.2" width="4.3" height="4.6" rx="1"/><path d="M38 3.8l1.8-1.1v3.6L38 5.2"/></g><path d="M43.3 3.8h2.4l-1.2 1.4z" fill="#444746"/></svg>
  <div class="abs" style="left:571.7px;top:113px;width:50.1px;height:12.2px;border-radius:6.1px;background:#c2e7ff;"></div>
  <div class="abs" style="left:612.4px;top:113px;width:.5px;height:12.2px;background:#f9fbfd;"></div>
  <svg class="abs" style="left:577px;top:116.6px" width="5" height="5" viewBox="0 0 5 5"><circle cx="2.5" cy="2.5" r="2.3" fill="#001d35"/><path d="M1 1.3c.8.3 1.5.2 1.7.8s-.8.6-.6 1.3.9.4 1.1 1.1" fill="none" stroke="#c2e7ff" stroke-width=".5"/></svg>
  <div class="t" style="left:585px;top:116.9px;font-size:4.56px;color:#001d35;font-weight:bold;letter-spacing:-.12px">Поділитися</div>
  <svg class="abs" style="left:615.6px;top:118.3px" width="3" height="2" viewBox="0 0 3 2"><path d="M.2.3h2.6L1.5 1.8z" fill="#001d35"/></svg>
  <div class="abs" style="left:627.6px;top:114.5px;width:9.2px;height:9.2px;border-radius:4.6px;background:#e4dfdb;"></div>
  <!-- docs toolbar -->
  <div class="abs" style="left:113px;top:130.8px;width:524.5px;height:10.4px;border-radius:5.2px;background:#edf2fa;"></div>
  <div class="abs" style="left:115.2px;top:131.3px;width:30px;height:9.4px;border-radius:4.7px;background:#fff;"></div>
  <svg class="abs" style="left:118.3px;top:134px" width="4.4" height="4.4" viewBox="0 0 7 7"><circle cx="2.9" cy="2.9" r="2" fill="none" stroke="#444746" stroke-width="1"/><path d="M4.4 4.4L6.4 6.4" stroke="#444746" stroke-width="1"/></svg>
  <div class="t" style="left:126px;top:134.3px;font-size:4.45px;color:#444746;">Меню</div>
  <svg class="abs" style="left:147px;top:132px" width="50" height="8" viewBox="0 0 50 8"><g fill="none" stroke="#444746" stroke-width=".8"><path d="M2.2 3.2h2.4a1.5 1.5 0 010 3H3M3.4 1.9L2.1 3.2l1.3 1.3"/><path d="M15 3.2h-2.4a1.5 1.5 0 000 3H14.2M13.8 1.9l1.3 1.3-1.3 1.3"/><rect x="21" y="3" width="4.6" height="2.6" rx=".5"/><path d="M22 3V1.6h2.6V3M22 5v1.6h2.6V5"/><path d="M31.2 5.4l1.5-3.8 1.5 3.8M31.7 4.2h2M33.8 6.3l.8.8 1.4-1.7" stroke-width=".7"/><path d="M41.2 1.5h4v1.6h-4zM45.2 2.3h.9v1.5h-2.7v1M43.4 4.8v2" /></g></svg>
  <div class="t" style="left:197.5px;top:134.3px;font-size:4.5px;color:#444746;">100%</div>
  <svg class="abs" style="left:212.5px;top:135.3px" width="3" height="2" viewBox="0 0 3 2"><path d="M.2.3h2.6L1.5 1.8z" fill="#444746"/></svg>
  <div class="abs" style="left:219px;top:133px;width:.4px;height:6px;background:#c7c7c7;"></div>
  <div class="t" style="left:224px;top:134.3px;font-size:4.36px;color:#444746;">Звичайни...</div>
  <div class="t" style="left:325.7px;top:133.6px;font-size:4.6px;color:#444746;font-weight:bold;">B</div>
  <div class="t" style="left:336px;top:133.6px;font-size:4.6px;color:#444746;font-style:italic;font-weight:bold;font-family:'Liberation Serif',serif;">I</div>
  <div class="t" style="left:345.3px;top:133.6px;font-size:4.5px;color:#444746;text-decoration:underline;">U</div>
  <div class="t" style="left:355.4px;top:133.3px;font-size:4.5px;color:#444746;">A</div>
  <div class="abs" style="left:354.3px;top:138.2px;width:5.4px;height:.9px;background:#000;"></div>
  <svg class="abs" style="left:365px;top:133px" width="136" height="6.5" viewBox="0 0 136 6.5"><g fill="none" stroke="#444746" stroke-width=".7"><path d="M1.3 4.3l2.5-2.8 1.2 1.1-2.5 2.8zM1.3 4.3l-.5 1.3 1.7-.2" fill="#444746"/><path d="M8.5.5v5.5" stroke="#c7c7c7" stroke-width=".4"/><path d="M13.8 2.2h-1a1.2 1.2 0 000 2.4h1M15.3 2.2h1a1.2 1.2 0 010 2.4h-1M13.5 3.4h2.1"/><rect x="22.3" y="1" width="4.6" height="4.4" rx=".5"/><path d="M24.6 2v2.4M23.4 3.2h2.4"/><rect x="31.8" y="1.2" width="4.6" height="4.2" rx=".5"/><path d="M32.5 4.7l1.2-1.4.9.9.7-.6 1 1.1z" fill="#444746" stroke="none"/><path d="M40.5.5v5.5" stroke="#c7c7c7" stroke-width=".4"/><path d="M43.5 1.3h4.2M44.3 2.6h2.6M43.5 3.9h4.2M44.3 5.2h2.6"/><path d="M57.3 1.6h3.8M57.3 3.3h3.8M57.3 5h3.8M59 1v4.7" /><path d="M67.5 1.6h1.2v1.2h-1.2zM67.5 4h1.2v1.2h-1.2zM69.8 2.2h2.6M69.8 4.6h2.6"/><path d="M81 1.6h1M81 3.3h1M81 5h1M83.3 1.6h3M83.3 3.3h3M83.3 5h3"/><path d="M94.5 1.6h1M94.5 3.3h1M94.5 5h1M96.8 1.6h3M96.8 3.3h3M96.8 5h3"/><path d="M108 1.2h4.5M110 2.6h2.5M110 4h2.5M108 5.4h4.5M107.8 2.5l1.1.8-1.1.8"/><path d="M117.5 1.2h4.5M119.5 2.6h2.5M119.5 4h2.5M117.5 5.4h4.5M118.6 2.5l-1.1.8 1.1.8"/><path d="M127.2 1.3h3.6M129 1.3l-.9 4M127 5.5h2.2M130.3 3.6l1.8 1.8M132.1 3.6l-1.8 1.8"/></g><g fill="#444746"><path d="M50.3 2.7h2.4l-1.2 1.4z"/><path d="M74.8 2.7h2.4L76 4.1z"/><path d="M88.3 2.7h2.4l-1.2 1.4z"/><path d="M101.8 2.7h2.4L103 4.1z"/></g></svg>
  <div class="t" style="left:504px;top:134px;font-size:4.4px;color:#444746;font-weight:bold;">Т<span style="font-size:3.3px">т</span></div>
  <svg class="abs" style="left:511.5px;top:135.3px" width="3" height="2" viewBox="0 0 3 2"><path d="M.2.3h2.6L1.5 1.8z" fill="#444746"/></svg>
  <svg class="abs" style="left:579px;top:133.4px" width="5" height="5" viewBox="0 0 5 5"><path d="M.5 4.5l.3-1.3L3.6.4l1 1L1.8 4.2z" fill="#444746"/></svg>
  <div class="t" style="left:587px;top:134.3px;font-size:4.34px;color:#444746;">Редагува...</div>
  <svg class="abs" style="left:612.5px;top:135.3px" width="3" height="2" viewBox="0 0 3 2"><path d="M.2.3h2.6L1.5 1.8z" fill="#444746"/></svg>
  <div class="abs" style="left:623.5px;top:133px;width:.4px;height:6px;background:#dadce0;"></div>
  <svg class="abs" style="left:627px;top:134.3px" width="4.4" height="3" viewBox="0 0 4.4 3"><path d="M.5 2.4L2.2.7l1.7 1.7" fill="none" stroke="#444746" stroke-width=".7"/></svg>

  <!-- ruler -->
  
  
  <div class="abs" style="left:473.5px;top:143.5px;width:18px;height:5.5px;background:#eef0f3;"></div>
  <svg class="abs" style="left:276px;top:146.6px" width="216" height="2.4" viewBox="0 0 216 2.4"><path d="M42 1.6H215" stroke="#9aa0a6" stroke-width="1.2" stroke-dasharray=".4 2.505" stroke-dashoffset="-1.58"/><path d="M42 1.2H215" stroke="#9aa0a6" stroke-width="2" stroke-dasharray=".4 5.41" stroke-dashoffset="-1.58"/></svg>
  <div class="t rn" style="left:319.5px;">4</div><div class="t rn" style="left:331.1px;">5</div><div class="t rn" style="left:342.7px;">6</div><div class="t rn" style="left:354.3px;">7</div><div class="t rn" style="left:366px;">8</div><div class="t rn" style="left:377.6px;">9</div><div class="t rn" style="left:389.2px;">10</div><div class="t rn" style="left:400.8px;">11</div><div class="t rn" style="left:412.4px;">12</div><div class="t rn" style="left:424.1px;">13</div><div class="t rn" style="left:435.7px;">14</div><div class="t rn" style="left:447.3px;">15</div><div class="t rn" style="left:458.9px;">16</div><div class="t rn" style="left:470.5px;">17</div><div class="t rn" style="left:482.2px;">18</div>
  <svg class="abs" style="left:376.1px;top:143.8px" width="3.8" height="4.6" viewBox="0 0 5 6"><path d="M.5.3h4v1.3h-4z" fill="#1a73e8"/><path d="M.5 2.3h4L2.5 5z" fill="#1a73e8"/></svg>
  <svg class="abs" style="left:471.4px;top:145px" width="4.2" height="3.4" viewBox="0 0 5 4"><path d="M.5.3h4L2.5 3.3z" fill="#1a73e8"/></svg>
  <div class="abs" style="left:108px;top:149.2px;width:534.6px;height:.5px;background:#dadce0;"></div>
  <!-- left vertical ruler -->
  <div class="abs" style="left:108px;top:149.7px;width:4.5px;height:228px;background:#eef0f3;"></div>
  <svg class="abs" style="left:108px;top:153px" width="5" height="224" viewBox="0 0 5 224"><path d="M3.6 0V224" stroke="#aeb3b8" stroke-width="1.2" stroke-dasharray=".45 2.455"/><path d="M2.6 0V224" stroke="#aeb3b8" stroke-width="1" stroke-dasharray=".45 11.17"/></svg>
  <!-- outline button -->
  <div class="abs" style="left:118.6px;top:155.5px;width:9px;height:9px;border-radius:4.5px;background:#e6e9ee;"></div>
  <svg class="abs" style="left:121.3px;top:158.3px" width="3.6" height="3.4" viewBox="0 0 3.6 3.4"><path d="M.2.5h3.2M.2 1.7h3.2M.2 2.9h3.2" stroke="#5f6368" stroke-width=".6"/></svg>
  <!-- page -->
  <div class="abs" style="left:247px;top:153px;width:244.5px;height:225px;background:#fff;box-shadow:0 0 0 .5px #e3e5e8;"></div>
  <!-- scrollbar -->
  <div class="abs" style="left:639.3px;top:150.5px;width:2.2px;height:62.5px;border-radius:1.1px;background:#dadce0;"></div>
  <!-- document text -->
  <div class="t ds" style="left:274.8px;width:200px;text-align:center;top:178.5px;font-size:5.73px;">МІНІСТЕРСТВО ОСВІТИ І НАУКИ УКРАЇНИ</div>
  <div class="t ds" style="left:274.8px;width:200px;text-align:center;top:185.4px;font-size:5.75px;font-weight:bold;">ДЕРЖАВНИЙ УНІВЕРСИТЕТ ЕКОНОМІКИ І ТЕХНОЛОГІЙ</div>
  <div class="t ds" style="left:274.8px;width:200px;text-align:center;top:208.2px;font-size:10px;">ОБҐРУНТУВАННЯ</div>
  <div class="t ds" style="left:275.6px;width:200px;text-align:center;top:220.2px;font-size:5.7px;">ТЕМИ ДИСЕРТАЦІЇ:</div>
  <div class="abs" style="left:277px;top:237.6px;width:189.5px;height:.9px;background:#111;"></div>
  <div class="t ds b" style="left:378.4px;top:245.2px;">Аспірант:</div>
  <div class="abs" style="left:378.4px;top:256px;width:86px;height:.8px;background:#111;"></div>
  <div class="t ds" style="left:378.4px;top:269.8px;">Група МН-<span style="border-bottom:.5px dotted #e06055;">23ДФ</span></div>
  <div class="t ds b" style="left:378.4px;top:280.1px;">Погоджено:</div>
  <div class="t ds" style="left:378.4px;top:286.3px;">Науковий керівник</div>
  <div class="t ds" style="left:378.4px;top:292.1px;text-decoration:underline;">САГАЙДАК М.П., д.е.н.,</div>
  <div class="t ds" style="left:378.4px;top:297.3px;text-decoration:underline;">професор</div>
  <div class="abs" style="left:378.4px;top:307.1px;width:39px;height:.5px;background:#222;"></div>
  <div class="t ds b" style="left:393.2px;top:309.2px;font-size:3.3px;">(підпис)</div>
  <!-- lower two columns -->
  <div class="t ds b" style="left:279.3px;top:324.1px;">Рекомендовано:</div>
  <div class="t ds" style="left:279.3px;top:330.1px;width:87px;text-align:justify;text-align-last:justify;white-space:normal;">Кафедрою управління бізнесом</div>
  <div class="t ds" style="left:279.3px;top:336.4px;">навчально-наукового інституту</div>
  <div class="t ds" style="left:279.3px;top:342.7px;">економіки та бізнес-освіти</div>
  <div class="t ds" style="left:279.3px;top:347.9px;">(протокол від 28.11.2023 р. №5 )</div>
  <div class="t ds" style="left:279.3px;top:354.2px;">В.о. завідувача кафедри</div>
  <div class="t ds" style="left:279.3px;top:360.4px;">___________Т. ПЕТРІШИНА</div>
  <div class="t ds b" style="left:371px;top:324.1px;">Погоджено:</div>
  <div class="t ds" style="left:371px;top:330.1px;width:83px;text-align:justify;text-align-last:justify;white-space:normal;">Науково-технічної радою Державного</div>
  <div class="t ds" style="left:371px;top:336.4px;">університету економіки і технологій</div>
  <div class="t ds" style="left:371px;top:342.7px;">(протокол від 19.12.2023 р. №2 )</div>
  <div class="t ds" style="left:371px;top:347.9px;">Голова науково-технічної ради</div>
  <div class="t ds" style="left:371px;top:354.2px;">_______________ С. ГУЩКО</div>
  <div class="t ds b" style="left:386px;top:361.6px;font-size:3.3px;">(підпис)</div>

  <svg class="abs" style="left:112.6px;top:94.3px" width="4" height="5.5" viewBox="0 0 8 11"><path d="M.6.6v8.3l2-1.8 1.4 3.2 1.3-.6-1.4-3.1h2.7z" fill="#fff" stroke="#222" stroke-width=".9"/></svg>
  <!-- webcam tiles -->
  <div class="abs" style="left:254.5px;top:98px;width:63px;height:107px;background:#e9ebee;"></div>
  <!-- tile 1 -->
  <div class="abs" style="left:254.9px;top:98.4px;width:62.1px;height:34.5px;background:#0b0b0b;overflow:hidden;">
    <svg class="abs" style="left:7.2px;top:0" width="47.4" height="34.5" viewBox="0 0 47.4 34.5"><defs><filter id="b1" x="-10%" y="-10%" width="120%" height="120%"><feGaussianBlur stdDeviation=".8"/></filter><clipPath id="c1"><rect width="47.4" height="34.5"/></clipPath></defs><g clip-path="url(#c1)"><rect width="47.4" height="34.5" fill="#e7e7e1"/><g filter="url(#b1)"><rect x="-1" y="12.8" width="18" height="18" fill="#a4622f"/><rect x="3" y="14" width="11" height="15" fill="#b06e3c"/><rect x="1" y="15.5" width="4" height="4" fill="#ead9b0"/><rect x="-1" y="30.5" width="12" height="5" fill="#d9d4c8"/><rect x="37.3" y="-1" width="2.3" height="37" fill="#efd3bb"/><rect x="35.5" y="13" width="3.5" height="17" fill="#b8784e"/><rect x="42.5" y="28.5" width="6" height="7" fill="#a65c38"/><path d="M16 36C15 26 17 14 20 9c2-4 6-5.5 9-5 4 .5 7 3 8 8 1 6 .5 12 1.5 16l3 8z" fill="#d6c8a2"/><path d="M17.5 34c-.5-8 .5-16 3.5-22 1-2 2-3 3-3.5-1.5 3-2 7-2 12s.5 9 1 13.5z" fill="#b8a67c"/><path d="M8 36c0-6 5-9.5 12-10h14c7 .5 12 4 13 10z" fill="#d6d2c5"/><path d="M23.3 13c0-4 2.5-6.5 5.5-6.5s5 2.5 5 6.5c0 5-.5 9-2 11.5-1 1.7-2.5 2.5-3.5 2.5-1.5 0-3-1.3-4-4-.8-2.5-1-6-1-10z" fill="#deb49e"/><path d="M24.6 14.5c1-.6 2.2-.6 3.1 0M29.9 14.5c1-.6 2.2-.6 3.1 0" stroke="#5e4238" stroke-width="1.3" fill="none"/><path d="M26.8 22.3c1.1.6 2.5.6 3.6 0" stroke="#9c4e48" stroke-width="1.2" fill="none"/><path d="M28.3 16v4" stroke="#c99a86" stroke-width=".8"/><path d="M23.5 9c1.5-2.5 6-3 9-1 1.5 1 2 3 2 5-1-3-3-4.5-5.5-4.5S25 9.5 23.5 12z" fill="#e6dcbc"/></g></g></svg>
    <div class="abs" style="left:0;top:30px;width:33.6px;height:4.5px;background:rgba(28,28,28,.88);"></div>
    <div class="t" style="left:1px;top:30.9px;font-size:3.1px;color:#fff;">АСПІРАНТУРА ДУЕТ</div>
  </div>
  <!-- tile 2 -->
  <div class="abs" style="left:254.9px;top:134.4px;width:62.1px;height:34.3px;background:#171717;overflow:hidden;">
    <svg class="abs" style="left:20.9px;top:0" width="19.9" height="34.3" viewBox="0 0 19.9 34.3"><defs><filter id="b2" x="-10%" y="-10%" width="120%" height="120%"><feGaussianBlur stdDeviation=".85"/></filter><clipPath id="c2"><rect width="19.9" height="34.3"/></clipPath></defs><g clip-path="url(#c2)"><rect width="19.9" height="34.3" fill="#dbdbd5"/><g filter="url(#b2)"><rect x="-1" y="15" width="4.5" height="11" fill="#c9b491"/><rect x="-1" y="25" width="22" height="10" fill="#c4c0b8"/><path d="M0 36c0-6 3-9.5 7-10.5h8c4 1 6 4.5 6 10.5z" fill="#a19b95"/><path d="M6.8 20c0-5 2-7.5 4.7-7.5s4.7 2.5 4.7 7.5c0 4-1.5 7.5-4.7 7.5S6.8 24 6.8 20z" fill="#caa28e"/><path d="M6.6 18c-.3-4 2-6 4.9-6s5.2 2 4.9 6c-.8-2-2.5-3-4.9-3s-4.1 1-4.9 3z" fill="#3a322e"/><path d="M8.4 19.6h2.2M12.4 19.6h2.2" stroke="#5a4036" stroke-width=".7"/><path d="M10.3 24.3h2.6" stroke="#9a5e54" stroke-width=".6"/><path d="M9.5 28v5M13.5 28v5" stroke="#d8d4cc" stroke-width=".5"/></g></g></svg>
    <div class="abs" style="left:0;top:29.6px;width:24.7px;height:4.7px;background:rgba(34,34,34,.88);"></div>
    <div class="t" style="left:1px;top:30.5px;font-size:3.3px;color:#fff;">Роман Рябцев</div>
  </div>
  <!-- tile 3 -->
  <div class="abs" style="left:254.9px;top:169.7px;width:62.1px;height:34.7px;background:#c6c6c4;overflow:hidden;">
    <svg class="abs" style="left:0;top:0" width="62.1" height="34.7" viewBox="0 0 62.1 34.7"><defs><filter id="b3" x="-10%" y="-10%" width="120%" height="120%"><feGaussianBlur stdDeviation=".8"/></filter><linearGradient id="g3" x1="0" y1="0" x2="1" y2="0"><stop offset="0" stop-color="#b4d2e8"/><stop offset=".2" stop-color="#d4e4ee"/><stop offset=".3" stop-color="#e2e6e8"/><stop offset=".45" stop-color="#d2d3d2"/><stop offset=".6" stop-color="#c6c6c4"/><stop offset="1" stop-color="#cacac8"/></linearGradient><clipPath id="c3"><rect width="62.1" height="34.7"/></clipPath></defs><g clip-path="url(#c3)"><rect width="62.1" height="34.7" fill="url(#g3)"/><g filter="url(#b3)"><rect x="-1" y="26" width="22" height="10" fill="#e6eaec"/><path d="M20 37c1-5 3-8 5-13 .5-6 1-10 4-12.5 3-2 7-2 10 0 3 2.5 4 7 4.5 12.5 2 5 5 8 6 13z" fill="#4b3d39"/><path d="M21 37c0-4 3-6.5 8-7h11c5 .5 9 3 10 7z" fill="#8a7468"/><path d="M29.5 19c0-4 2-6 4.6-6s4.6 2 4.6 6c0 3.5-1.6 6.5-4.6 6.5S29.5 22.5 29.5 19z" fill="#c29e8e"/><path d="M27.5 26c0-2 2.5-3.3 6.6-3.3s6.6 1.3 6.6 3.3-2.5 3.6-6.6 3.6-6.6-1.6-6.6-3.6z" fill="#d2ac9c"/><path d="M31 18.3h2M35.3 18.3h2" stroke="#4a3830" stroke-width=".7"/><path d="M33 22.3h2.4" stroke="#945c54" stroke-width=".5"/></g></g></svg>
    <div class="abs" style="left:0;top:29.8px;width:29.6px;height:4.9px;background:rgba(40,40,40,.82);border-radius:0 1.2px 0 0;"></div>
    <div class="t" style="left:1px;top:30.8px;font-size:3.3px;color:#fff;">Liudmyla Ryhvaha</div>
  </div>
  <!-- recorded taskbar -->
  <div class="abs" style="left:108px;top:366px;width:534.6px;height:11px;background:#1d3145;"></div>
  <svg class="abs" style="left:112px;top:369.5px" width="4.4" height="4.4" viewBox="0 0 7 7"><path d="M0 0h3.2v3.2H0zM3.8 0H7v3.2H3.8zM0 3.8h3.2V7H0zM3.8 3.8H7V7H3.8z" fill="#e8eef5"/></svg>
  <div class="abs" style="left:120.5px;top:366.5px;width:80px;height:11px;background:#e4e6e9;"></div>
  <div class="t" style="left:560px;top:369px;font-size:3px;color:#7f8a96;">12°C&nbsp; Mostly cloudy</div><div class="t" style="left:622px;top:367.3px;font-size:2.8px;color:#cfd6de;line-height:1.5;text-align:right;">13:02<br>10.1.2025</div>
  <svg class="abs" style="left:549px;top:368.5px" width="8" height="5" viewBox="0 0 8 5"><circle cx="5.5" cy="2" r="1.6" fill="#f2b33d"/><path d="M1.5 4.5a1.3 1.3 0 010-2.6 1.8 1.8 0 013.4.4 1.1 1.1 0 01.1 2.2z" fill="#dfe6ee"/></svg>
  <div class="abs" style="left:186px;top:368px;width:11px;height:7px;border-radius:2px;background:linear-gradient(90deg,#3b8ed8,#f2b33d 45%,#e58a2e);"></div>
  <div class="abs" style="left:206px;top:368.5px;width:5px;height:5px;background:#9aa4b0;border-radius:1px;"></div><div class="abs" style="left:219.5px;top:368.5px;width:6px;height:5px;background:#e9c04a;border-radius:1px;"></div><div class="abs" style="left:233px;top:368px;width:6px;height:6px;border-radius:3px;border:1.3px solid #e3262f;box-sizing:border-box;"></div><div class="abs" style="left:246px;top:368px;width:6.5px;height:6.5px;border-radius:3.3px;background:#2f6fd6;"></div><div class="abs" style="left:260px;top:368px;width:6.5px;height:6.5px;border-radius:3.3px;background:conic-gradient(#ea4335 0 33%,#fbbc04 0 66%,#34a853 0);"></div>
  <div class="t" style="left:130px;top:369.3px;font-size:4px;color:#444;">Пошук</div>
  <!-- bottom gradient scrim -->
  <div class="abs" style="left:106.7px;top:300px;width:537.3px;height:77.4px;background:linear-gradient(180deg,rgba(0,0,0,0) 0,rgba(0,0,0,.02) 3.9%,rgba(0,0,0,.09) 14.2%,rgba(0,0,0,.215) 23.3%,rgba(0,0,0,.35) 32.3%,rgba(0,0,0,.47) 40.1%,rgba(0,0,0,.55) 46.6%,rgba(0,0,0,.61) 58.2%,rgba(0,0,0,.64) 77.6%,rgba(0,0,0,.66) 100%);"></div>
  <!-- progress bar -->
  <div class="abs" style="left:113.3px;top:337.5px;width:523.7px;height:1.3px;background:rgba(255,255,255,.55);"></div>
  <div class="abs" style="left:113.3px;top:337.5px;width:348.5px;height:1.3px;background:#fff;"></div>
  <div class="abs" style="left:461.8px;top:337px;width:6.8px;height:2.3px;background:#6c6c6c;"></div>
  <div class="abs" style="left:464.3px;top:333.5px;width:1.5px;height:10px;border-radius:.75px;background:#fff;"></div>
  <!-- control pills -->
  <div class="abs pill" style="left:113px;top:349px;width:47.8px;height:21.8px;"></div>
  <div class="abs pill" style="left:164.6px;top:349px;width:83.6px;height:21.8px;"></div>
  <div class="abs pill" style="left:519.2px;top:349px;width:118.3px;height:21.8px;"></div>
  <div class="abs" style="left:134.9px;top:357px;width:1.3px;height:5.9px;background:#fff;"></div>
  <div class="abs" style="left:138.5px;top:357px;width:1.3px;height:5.9px;background:#fff;"></div>
  <svg class="abs" style="left:174px;top:356.4px" width="25" height="10" viewBox="0 0 25 10"><g fill="none" stroke="#fff" stroke-width=".75"><path d="M4.6 1.7A3.3 3.3 0 111.5 3.8"/><path d="M20.1 1.7A3.3 3.3 0 1023.2 3.8"/></g><path d="M4.9.3v2.8L3 1.7zM19.8.3v2.8l1.9-1.4z" fill="#fff"/><text x="4.7" y="6.1" font-size="2.7" fill="#fff" text-anchor="middle" font-family="Liberation Sans, sans-serif" font-weight="bold">10</text><text x="20" y="6.1" font-size="2.7" fill="#fff" text-anchor="middle" font-family="Liberation Sans, sans-serif" font-weight="bold">10</text></svg>
  <div class="t" style="left:205px;top:357.7px;font-size:5.4px;color:#fff;font-weight:bold;letter-spacing:-.32px;">29:27</div><div class="t" style="left:221.7px;top:357.7px;font-size:5.4px;color:#fff;font-weight:bold;letter-spacing:.12px;">/ 43:43</div>
  <svg class="abs" style="left:529px;top:355.5px" width="100" height="10" viewBox="0 0 100 10"><g fill="#fff"><path d="M1.5 3.8v2.4h1.7l2.1 2V1.8l-2.1 2z"/><path d="M6.2 3.2a2.2 2.2 0 010 3.6z"/><path d="M6.2 1.3v.9a3 3 0 010 5.6v.9a3.9 3.9 0 000-7.4z"/></g><g fill="none" stroke="#fff" stroke-width=".8"><rect x="23.8" y="2.2" width="7" height="5.6" rx=".6"/><path d="M25 5.7h1.6M27.8 5.7h1.8" stroke-width=".9"/><path d="M90 3.8V2h1.9M95.2 2h1.9v1.8M97.1 6.2V8h-1.9M91.9 8H90V6.2" stroke-width="1"/><circle cx="70.9" cy="5.2" r="3.2" stroke-width="1" stroke-dasharray="1.25 1.263"/><circle cx="70.9" cy="5.2" r="2.6" stroke-width=".75"/></g><circle cx="70.9" cy="5.2" r="1.05" fill="none" stroke="#fff" stroke-width=".65"/><text x="49.2" y="6.4" font-size="5" fill="#fff" text-anchor="middle" font-family="Liberation Sans, sans-serif">1x</text></svg>
  <svg class="abs" style="left:637.5px;top:355.5px" width="3" height="5" viewBox="0 0 3 5"><path d="M2.2.7L.8 2.3l1.4 1.6" fill="none" stroke="#cfcfcf" stroke-width=".5"/></svg>
  <!-- preview tooltip -->
  <div class="abs" style="left:421px;top:272.2px;width:77.6px;height:58.8px;border-radius:3.5px 3.5px 4.5px 4.5px;background:#4b4b4b;overflow:hidden;box-shadow:0 .5px 2px rgba(0,0,0,.35);">
    <div class="abs" style="left:0;top:0;width:78.3px;height:42.8px;background:#f6f8fb;"></div>
    <div class="abs" style="left:0;top:0;width:78.3px;height:1.6px;background:#e6dcd9;"></div>
    <div class="abs" style="left:2px;top:3px;width:74px;height:1.2px;background:#e1e1e1;border-radius:.6px;"></div>
    <div class="abs" style="left:2.5px;top:6.2px;width:16px;height:.9px;background:#8aa5d8;"></div>
    <div class="abs" style="left:63px;top:5.5px;width:7px;height:1.8px;border-radius:.9px;background:#c2e7ff;"></div>
    <div class="abs" style="left:1px;top:8.2px;width:76px;height:1.5px;border-radius:.75px;background:#edf2fa;"></div>
    <div class="abs" style="left:20.5px;top:11.5px;width:35.5px;height:30px;background:#fff;box-shadow:0 0 0 .3px #e0e0e0;"></div>
    <div class="abs" style="left:21.2px;top:4px;width:10.4px;height:8px;background:#222;"></div>
    <div class="abs" style="left:23.2px;top:4px;width:6.4px;height:8px;background:#cfc6b4;"></div>
    <div class="abs" style="left:21.2px;top:12.2px;width:10.4px;height:7.8px;background:#1b1b1b;"></div>
    <div class="abs" style="left:24.5px;top:12.2px;width:4px;height:7.8px;background:#b9a89a;"></div>
    <div class="abs" style="left:31px;top:15.5px;width:17px;height:.6px;background:#b5b5b5;"></div>
    <div class="abs" style="left:29px;top:16.6px;width:24px;height:.6px;background:#a0a0a0;"></div>
    <div class="abs" style="left:32.5px;top:20.3px;width:13px;height:1.1px;background:#a0a0a0;"></div>
    <div class="abs" style="left:35.5px;top:22px;width:7.5px;height:.5px;background:#c0c0c0;"></div>
    <div class="abs" style="left:25px;top:24.3px;width:27.5px;height:.3px;background:#8a8a8a;"></div>
    <div class="abs" style="left:39.7px;top:25.5px;width:3.5px;height:.5px;background:#b0b0b0;"></div>
    <div class="abs" style="left:39.7px;top:27px;width:12.5px;height:.3px;background:#a0a0a0;"></div>
    <div class="abs" style="left:39.7px;top:29px;width:5.5px;height:.5px;background:#b5b5b5;"></div>
    <div class="abs" style="left:39.7px;top:30.5px;width:4px;height:.5px;background:#b0b0b0;"></div>
    <div class="abs" style="left:39.7px;top:31.5px;width:6.5px;height:.5px;background:#b5b5b5;"></div>
    <div class="abs" style="left:39.7px;top:32.4px;width:9.5px;height:.5px;background:#b0b0b0;"></div>
    <div class="abs" style="left:39.7px;top:33.3px;width:3.5px;height:.5px;background:#b5b5b5;"></div>
    <div class="abs" style="left:25.3px;top:35.8px;width:12.5px;height:4.5px;background:#dedede;"></div>
    <div class="abs" style="left:38.7px;top:35.8px;width:12.5px;height:4.5px;background:#dedede;"></div>
    <div class="abs" style="left:0;top:41.2px;width:78.3px;height:1.6px;background:#0b1622;"></div>
    <div class="abs" style="left:2px;top:41.5px;width:11px;height:1px;background:#c9ccd1;"></div>
    <div class="t" style="left:0;width:77.6px;text-align:center;top:49.9px;font-size:5.5px;color:#fff;font-weight:bold;letter-spacing:-.1px;">29:00</div>
  </div>
</div>
</div>

<!-- ===== Windows taskbar ===== -->
<div class="abs" id="taskbar"></div>
<svg class="abs" style="left:6px;top:410.8px" width="7" height="7" viewBox="0 0 7 7"><path d="M0 1l2.9-.4v2.7H0zM3.3.5L7 0v3.3H3.3zM0 3.7h2.9v2.7L0 6zM3.3 3.7H7V7l-3.7-.5z" fill="#fff"/></svg>
<div class="abs" style="left:18.7px;top:405.8px;width:112.3px;height:16.2px;background:#3c3c3c;"></div>
<svg class="abs" style="left:23.5px;top:411px" width="6.5" height="6.5" viewBox="0 0 6.5 6.5"><circle cx="3.9" cy="2.6" r="1.9" fill="none" stroke="#e6e6e6" stroke-width=".6"/><path d="M2.5 4L.5 6" stroke="#e6e6e6" stroke-width=".6"/></svg>
<div class="t" style="left:34.7px;top:411.5px;font-size:6.06px;color:#dcdcdc;">Поиск</div>
<svg class="abs" style="left:102px;top:407px" width="27" height="14" viewBox="0 0 27 14"><path d="M10.6 2.3c.5 3 1.4 4 4.4 4.7-3 .7-3.9 1.7-4.4 4.7-.5-3-1.4-4-4.4-4.7 3-.7 3.9-1.7 4.4-4.7z" fill="#fbc531"/><path d="M19.5 5.5c.3 1.8.9 2.4 2.7 2.8-1.8.4-2.4 1-2.7 2.8-.3-1.8-.9-2.4-2.7-2.8 1.8-.4 2.4-1 2.7-2.8z" fill="#f5b52a"/><circle cx="2.7" cy="10" r=".9" fill="#2d9cdb"/><circle cx="17" cy="3" r=".7" fill="#e8743b"/><circle cx="24.2" cy="11" r=".7" fill="#6ab04c"/></svg>
<!-- pinned apps -->
<svg class="abs" style="left:136.8px;top:409px" width="10" height="10" viewBox="0 0 20 20"><defs><linearGradient id="eg" x1="0" y1="0" x2="1" y2="1"><stop offset="0" stop-color="#35c1f1"/><stop offset=".55" stop-color="#1b88d8"/><stop offset="1" stop-color="#0c59a4"/></linearGradient><linearGradient id="eg2" x1="0" y1="0" x2="1" y2="0"><stop offset="0" stop-color="#2aa4e8"/><stop offset="1" stop-color="#5fd36b"/></linearGradient></defs><circle cx="10" cy="10" r="9.5" fill="url(#eg)"/><path d="M2 7C4 2 9 .5 13 1.5c4 1 6.5 4.5 6.5 8 0 3-2.5 4.5-5 4.5-2 0-3-1-2.5-2 .8-1.5.2-4-2.5-4.5S3.5 8 2 11z" fill="url(#eg2)"/><circle cx="5.5" cy="14.5" r="4.5" fill="#d8d8d8"/><circle cx="5.5" cy="13.2" r="1.5" fill="#6b6b6b"/><path d="M2.7 17.2a2.8 2.8 0 015.6 0z" fill="#6b6b6b"/></svg>
<svg class="abs" style="left:156px;top:409.5px" width="10" height="9" viewBox="0 0 10 9"><path d="M.5 1.3A.5.5 0 011 .8h2.7l.9 1H9a.5.5 0 01.5.5V3H.5z" fill="#f2b632"/><path d="M.5 2.6h9v5.4a.5.5 0 01-.5.5H1a.5.5 0 01-.5-.5z" fill="#fbd24c"/><path d="M2.8 5.2h4.4v3.3H2.8z" fill="#3a96dd"/><path d="M3.6 6h2.8v2.5H3.6z" fill="#fbd24c"/></svg>
<svg class="abs" style="left:175.5px;top:409.4px" width="9.2" height="9.2" viewBox="-10 -10 20 20"><circle r="10" fill="#fff"/><path d="M0 0L-8.66-5A10 10 0 018.66-5z" fill="#ea4335"/><path d="M0 0L8.66-5A10 10 0 010 10z" fill="#fbbc04"/><path d="M0 0L0 10A10 10 0 01-8.66-5z" fill="#34a853"/><circle r="4.6" fill="#fff"/><circle r="3.6" fill="#4285f4"/><circle cx="5.5" cy="5.5" r="4.2" fill="#d8d8d8"/><circle cx="5.5" cy="4.3" r="1.5" fill="#6b6b6b"/><path d="M2.8 8.2a2.8 2.8 0 015.4 0z" fill="#6b6b6b"/></svg>
<svg class="abs" style="left:194.9px;top:409.4px" width="9.2" height="9.2" viewBox="-10 -10 20 20"><circle r="10" fill="#fff"/><path d="M0 0L-8.66-5A10 10 0 018.66-5z" fill="#ea4335"/><path d="M0 0L8.66-5A10 10 0 010 10z" fill="#fbbc04"/><path d="M0 0L0 10A10 10 0 01-8.66-5z" fill="#34a853"/><circle r="4.6" fill="#fff"/><circle r="3.6" fill="#4285f4"/><circle cx="5.5" cy="5.5" r="4.2" fill="#d8d8d8"/><circle cx="5.5" cy="4.3" r="1.5" fill="#6b6b6b"/><path d="M2.8 8.2a2.8 2.8 0 015.4 0z" fill="#6b6b6b"/></svg>
<svg class="abs" style="left:213.5px;top:409.5px" width="10" height="9" viewBox="0 0 10 9"><path d="M3.5.5h5.5a.5.5 0 01.5.5v7a.5.5 0 01-.5.5H3.5z" fill="#2b7cd3"/><path d="M3.5 2.7h6v2H3.5z" fill="#41a5ee"/><path d="M3.5 4.7h6v2H3.5z" fill="#2b7cd3"/><path d="M3.5 6.5h6V8a.5.5 0 01-.5.5H3.5z" fill="#185abd"/><rect x=".4" y="2" width="5" height="5" rx=".5" fill="#185abd"/><path d="M1.3 3.2l.7 2.7.8-2.7.8 2.7.7-2.7" fill="none" stroke="#fff" stroke-width=".55"/><path d="M6.5 4.2h2M6.5 5.5h2" stroke="#e8f0fb" stroke-width=".5"/></svg>
<div class="abs" style="left:228px;top:405.8px;width:19.2px;height:16.2px;background:#353535;"></div>
<svg class="abs" style="left:232.9px;top:409.4px" width="9.2" height="9.2" viewBox="-10 -10 20 20"><circle r="10" fill="#fff"/><path d="M0 0L-8.66-5A10 10 0 018.66-5z" fill="#ea4335"/><path d="M0 0L8.66-5A10 10 0 010 10z" fill="#fbbc04"/><path d="M0 0L0 10A10 10 0 01-8.66-5z" fill="#34a853"/><circle r="4.6" fill="#fff"/><circle r="3.6" fill="#4285f4"/><circle cx="5.5" cy="5.5" r="4.2" fill="#d8d8d8"/><circle cx="5.5" cy="4.3" r="1.5" fill="#6b6b6b"/><path d="M2.8 8.2a2.8 2.8 0 015.4 0z" fill="#6b6b6b"/></svg>
<div class="abs ul" style="left:152.8px;width:16px;"></div>
<div class="abs ul" style="left:172px;width:16px;"></div>
<div class="abs ul" style="left:191.5px;width:16px;"></div>
<div class="abs ul" style="left:210.5px;width:16px;"></div>
<div class="abs ul" style="left:228px;width:19.2px;"></div>
<!-- tray -->
<svg class="abs" style="left:662px;top:409.6px" width="28" height="9" viewBox="0 0 28 9"><g fill="none" stroke="#f2f2f2" stroke-width=".6"><path d="M2.2 5.5L4 3.7l1.8 1.8"/><path d="M10.8 2.3h5v3.5h-5zM12.3 6.9h2M13.3 5.8v1.1"/><path d="M10.8 3h-1v3.6" stroke-width=".5"/><path d="M19.7 3.7h1l1.5-1.4v4.6l-1.5-1.4h-1z"/><path d="M23.3 3.2c.5.4.5 2.4 0 2.8M24.3 2.3c.9.9.9 3.7 0 4.6" stroke-width=".45"/></g></svg>
<div class="t tr" style="left:692px;top:412.9px;font-size:4.46px;color:#f2f2f2;">УКР</div>
<div class="t tr" style="left:706px;width:21px;text-align:center;top:408.6px;font-size:4.28px;color:#f2f2f2;">13:27</div>
<div class="t tr" style="left:706px;width:21px;text-align:center;top:415.5px;font-size:4.2px;color:#f2f2f2;">02.01.2026</div>
<svg class="abs" style="left:733.5px;top:410px" width="10" height="10" viewBox="0 0 10 10"><path d="M.8.8h6v4.5H3.8L2.3 6.8V5.3H.8z" fill="#f2f2f2"/><circle cx="6.8" cy="6.8" r="2.4" fill="#111" stroke="#f2f2f2" stroke-width=".5"/><text x="6.8" y="8" font-size="3.2" fill="#f2f2f2" text-anchor="middle" font-family="Liberation Sans, sans-serif">1</text></svg>
<div class="abs" style="left:748.3px;top:406px;width:.4px;height:16px;background:#5a5a5a;"></div>
</div>
</body>
</html>
